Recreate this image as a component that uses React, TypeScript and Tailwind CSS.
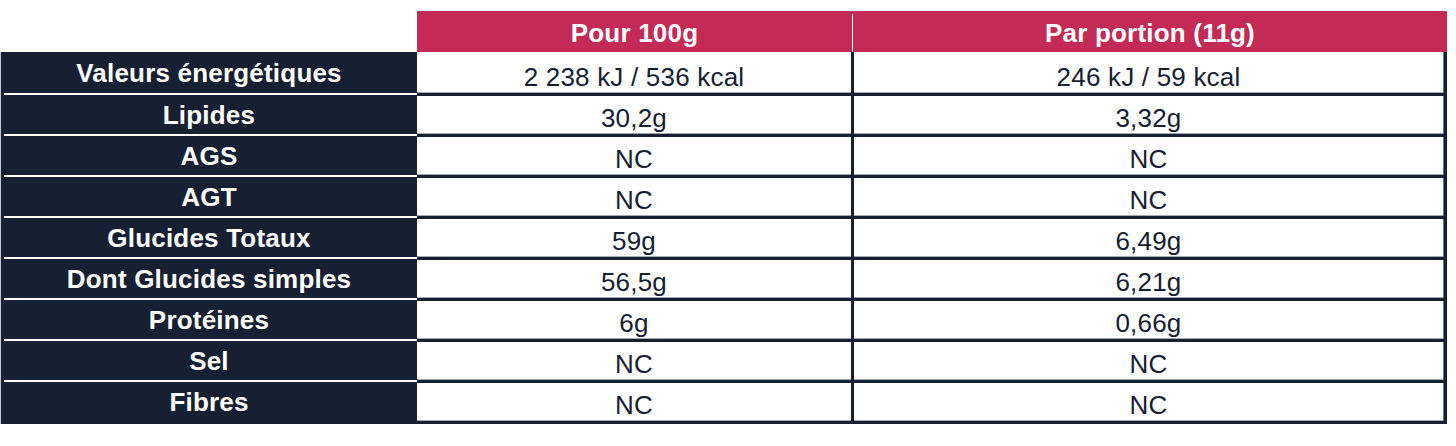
const rows = [
  { label: 'Valeurs énergétiques', a: '2 238 kJ / 536 kcal', b: '246 kJ / 59 kcal' },
  { label: 'Lipides', a: '30,2g', b: '3,32g' },
  { label: 'AGS', a: 'NC', b: 'NC' },
  { label: 'AGT', a: 'NC', b: 'NC' },
  { label: 'Glucides Totaux', a: '59g', b: '6,49g' },
  { label: 'Dont Glucides simples', a: '56,5g', b: '6,21g' },
  { label: 'Protéines', a: '6g', b: '0,66g' },
  { label: 'Sel', a: 'NC', b: 'NC' },
  { label: 'Fibres', a: 'NC', b: 'NC' },
];

export default function App() {
  return (
    <div
      className="h-[446px] w-[1456px] bg-white pt-[11px] text-[26px] leading-[30px] tracking-[0.2px]"
      style={{ fontFamily: '"Liberation Sans", Arial, sans-serif' }}
    >
      {/* column headers */}
      <div className="ml-[417px] flex h-[41px] w-[1030px] bg-[#c42a56] font-bold text-white">
        <div className="flex w-[435px] items-center justify-center pt-[2px]">Pour 100g</div>
        <div className="mt-[3px] w-[1px] bg-white" />
        <div className="flex flex-1 items-center justify-center pt-[2px]">Par portion (11g)</div>
      </div>

      {rows.map((r, i) => {
        const first = i === 0;
        const last = i === rows.length - 1;
        return (
          <div key={r.label} className="flex">
            <div className="flex w-[417px] flex-col border-l border-[#c5c8ce] bg-[#172033]">
              <div
                className={`flex items-center justify-center font-bold text-white ${first ? 'h-[41px]' : 'h-[38px]'}`}
              >
                {r.label}
              </div>
              <div className={`ml-[3px] h-[3px] ${last ? '' : 'border-t-2 border-white'}`} />
            </div>
            <div className="flex flex-col">
              <div className={`flex ${first ? 'h-[41px]' : 'h-[38px]'}`}>
                <div className="flex w-[434px] items-end justify-center border-b border-[#a4a8b0] bg-white text-[#172033]">
                  {r.a}
                </div>
                <div className="w-[3px] bg-[#172033]" />
                <div className="flex w-[589px] items-end justify-center border-b border-[#a4a8b0] bg-white text-[#172033]">
                  {r.b}
                </div>
                <div className="w-[4px] border-l border-[#6b7280] bg-[#172033]" />
              </div>
              <div className="h-[3px] bg-[#172033]" />
            </div>
          </div>
        );
      })}
    </div>
  );
}
